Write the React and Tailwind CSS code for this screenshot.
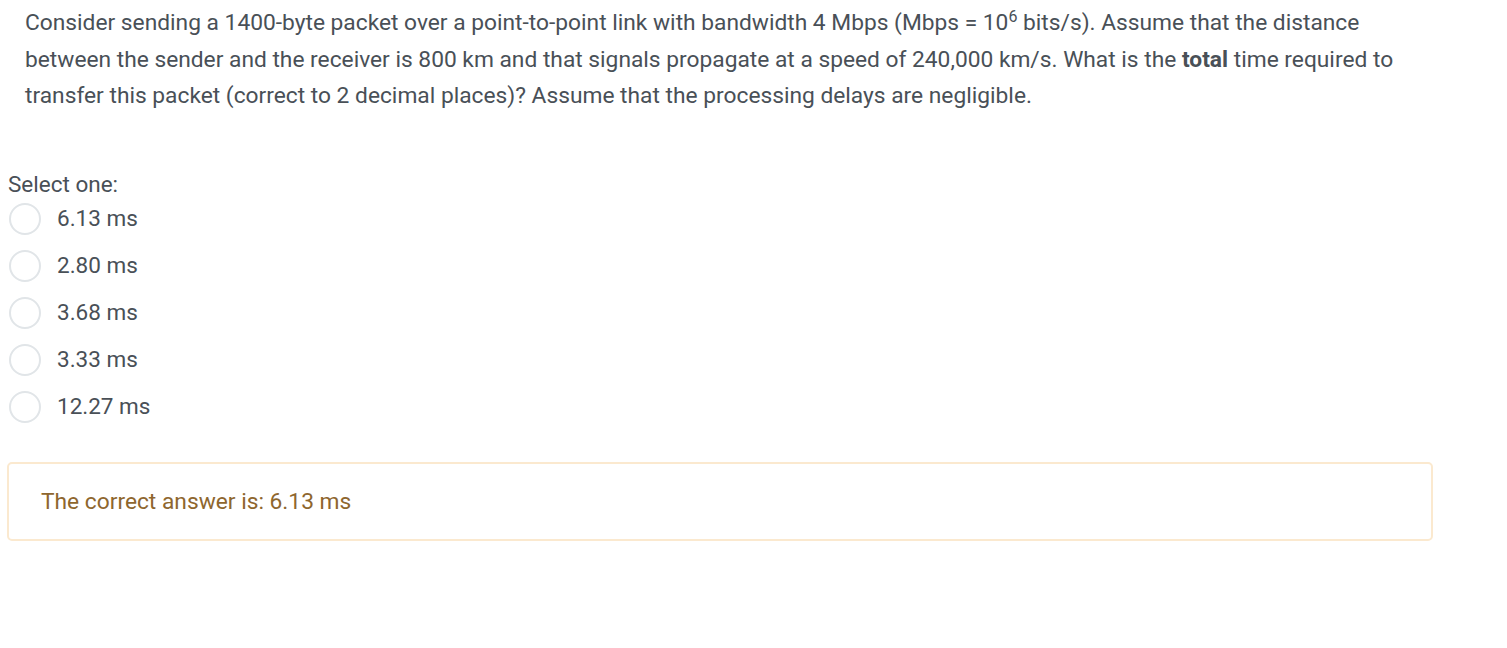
export default function App() {
  const options = ["6.13 ms", "2.80 ms", "3.68 ms", "3.33 ms", "12.27 ms"];
  return (
    <div className="w-[1507px] h-[648px] bg-white text-[#495057] text-[22.5px]" style={{ fontFamily: "Roboto, 'Liberation Sans', sans-serif" }}>
      <div className="pl-[25px] w-[1435px] pt-[5px] leading-[36.5px] text-[22.75px]">
        Consider sending a 1400-byte packet over a point-to-point link with bandwidth 4 Mbps (Mbps = 10<sup className="text-[16px]">6</sup> bits/s). Assume that the distance between the sender and the receiver is 800 km and that signals propagate at a speed of 240,000 km/s. What is the <strong className="font-bold">total</strong> time required to transfer this packet (correct to 2 decimal places)? Assume that the processing delays are negligible.
      </div>
      <div className="mt-[51px] pl-[8px]">
        <div className="leading-[36px]">Select one:</div>
        <div className="flex flex-col -mt-[6px]">
          {options.map((o) => (
            <div key={o} className="flex items-center h-[47px]">
              <div className="w-[32px] h-[32px] rounded-full border-2 border-[#e1e5e8] ml-[1px] bg-white" />
              <span className="ml-[16px]">{o}</span>
            </div>
          ))}
        </div>
      </div>
      <div className="ml-[7px] mt-[31px] w-[1426px] h-[79px] pt-[2px] border-2 border-[#fbe9cf] rounded-[5px] flex items-center pl-[32px] text-[22.75px] text-[#8e662e]">
        The correct answer is: 6.13 ms
      </div>
    </div>
  );
}
